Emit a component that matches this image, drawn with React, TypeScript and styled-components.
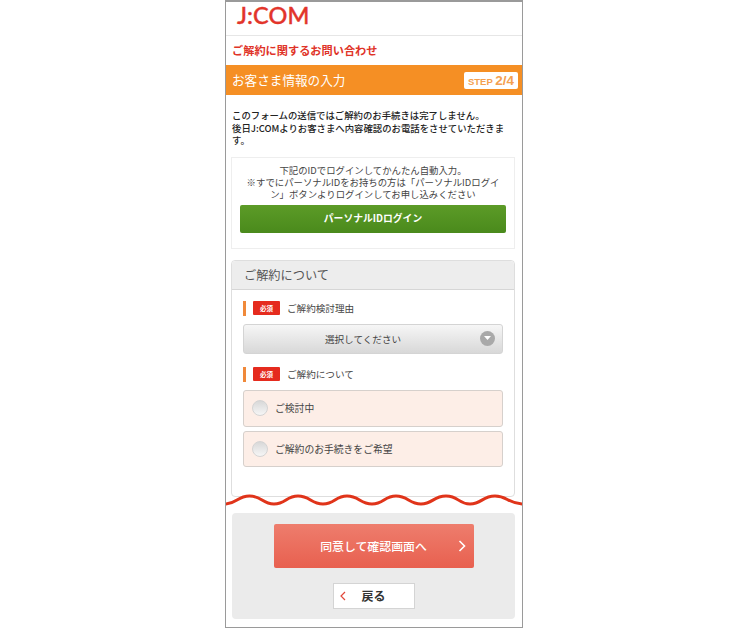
import React from 'react'
import styled, { createGlobalStyle } from 'styled-components'

const GlobalStyle = createGlobalStyle`
  html, body {
    margin: 0;
    padding: 0;
    background: #fff;
  }
  * {
    box-sizing: border-box;
  }
`

const App: React.FC = () => {
  return (
    <>
      <GlobalStyle />
      <Frame>
        <Header>
          <Logo>J:COM</Logo>
        </Header>
        <PageTitle>ご解約に関するお問い合わせ</PageTitle>
        <StepBar>
          <StepTitle>お客さま情報の入力</StepTitle>
          <StepBadge>
            STEP <b>2/4</b>
          </StepBadge>
        </StepBar>
        <Notice>
          このフォームの送信ではご解約のお手続きは完了しません。
          <br />
          後日J:COMよりお客さまへ内容確認のお電話をさせていただきます。
        </Notice>
        <LoginBox>
          <LoginText>
            下記のIDでログインしてかんたん自動入力。
            <br />
            ※すでにパーソナルIDをお持ちの方は「パーソナルIDログイン」ボタンよりログインしてお申し込みください
          </LoginText>
          <LoginButton>パーソナルIDログイン</LoginButton>
        </LoginBox>
        <Panel>
          <PanelHead>ご解約について</PanelHead>
          <PanelBody>
            <FieldLabel>
              <Required>必須</Required>
              ご解約検討理由
            </FieldLabel>
            <SelectBox>
              選択してください
              <SelectArrow>
                <svg width="7" height="4" viewBox="0 0 7 4">
                  <path d="M0 0h7L3.5 4z" fill="#fff" />
                </svg>
              </SelectArrow>
            </SelectBox>
            <FieldLabel>
              <Required>必須</Required>
              ご解約について
            </FieldLabel>
            <RadioCard $height={37}>
              <RadioDot />
              ご検討中
            </RadioCard>
            <RadioCard $height={36}>
              <RadioDot />
              ご解約のお手続きをご希望
            </RadioCard>
          </PanelBody>
        </Panel>
        <Wave viewBox="0 0 298 14" width="298" height="14">
          <path
            d="M-1 11 C 11 11 11 3 23.5 3 S 36 11 48 11 S 60 3 72 3 S 85 11 97 11 S 109 3 121 3 S 134 11 146 11 S 158 3 170 3 S 183 11 195 11 S 207 3 220 3 S 232 11 244 11 S 256 3 269 3 S 281 11 299 11"
            fill="none"
            stroke="#e0341a"
            strokeWidth="3"
          />
        </Wave>
        <Footer>
          <NextButton>
            同意して確認画面へ
            <NextIcon width="8" height="12" viewBox="0 0 8 12">
              <path d="M1.5 1l5 5-5 5" fill="none" stroke="#fff" strokeWidth="1.6" />
            </NextIcon>
          </NextButton>
          <BackButton>
            <BackIcon width="6" height="10" viewBox="0 0 6 10">
              <path d="M5 1L1 5l4 4" fill="none" stroke="#e2473a" strokeWidth="1.2" />
            </BackIcon>
            戻る
          </BackButton>
        </Footer>
      </Frame>
    </>
  )
}

export default App

const fontStack = `"Noto Sans CJK JP", "Liberation Sans", sans-serif`

const Frame = styled.div`
  position: relative;
  width: 298px;
  height: 628px;
  margin-left: 225px;
  border: 1px solid #9a9a9a;
  border-top-width: 2px;
  background: #fff;
  font-family: ${fontStack};
  overflow: hidden;
`

const Header = styled.div`
  height: 34px;
  padding-left: 11px;
  border-bottom: 1px solid #e6e6e6;
`

const Logo = styled.div`
  font-family: Lato, "Liberation Sans", sans-serif;
  font-size: 23.5px;
  line-height: 27px;
  font-weight: 500;
  letter-spacing: 0.1px;
  -webkit-text-stroke: 0.4px #e2342a;
  color: #e2342a;
`

const PageTitle = styled.h1`
  height: 29px;
  margin: 0;
  padding-left: 6px;
  font-size: 11.2px;
  line-height: 29px;
  font-weight: 700;
  color: #df3328;
`

const StepBar = styled.div`
  display: flex;
  align-items: center;
  justify-content: space-between;
  height: 30px;
  padding: 0 4px 0 6px;
  background: #f58f24;
`

const StepTitle = styled.div`
  padding-bottom: 2px;
  font-size: 12.6px;
  color: #fff;
`

const StepBadge = styled.div`
  width: 54px;
  height: 17px;
  border-radius: 2px;
  background: #fff;
  text-align: center;
  white-space: nowrap;
  font-family: "Liberation Sans", sans-serif;
  font-size: 9.5px;
  line-height: 17px;
  font-weight: 700;
  color: #f4a050;

  b {
    font-size: 13.5px;
  }
`

const Notice = styled.p`
  margin: 14px 0 10px;
  padding: 0 6px;
  font-size: 9.4px;
  line-height: 12.5px;
  font-weight: 500;
  color: #222;
`

const LoginBox = styled.div`
  height: 92px;
  margin: 0 7px 11px 5px;
  padding: 6px 8px 0;
  border: 1px solid #eeeeee;
`

const LoginText = styled.p`
  margin: 0 0 5px;
  text-align: center;
  font-size: 9.4px;
  line-height: 12.2px;
  color: #444;
`

const LoginButton = styled.div`
  height: 28px;
  border-radius: 2px;
  background: linear-gradient(#5c9b27, #4a8a1c);
  text-align: center;
  font-size: 9.8px;
  line-height: 27px;
  font-weight: 700;
  color: #fff;
`

const Panel = styled.div`
  height: 237px;
  margin: 0 7px 0 5px;
  border: 1px solid #dedede;
  border-radius: 4px;
`

const PanelHead = styled.div`
  height: 29px;
  padding-left: 12px;
  border-bottom: 1px solid #d6d6d6;
  border-radius: 4px 4px 0 0;
  background: #ededed;
  font-size: 12.2px;
  line-height: 28px;
  color: #555;
`

const PanelBody = styled.div`
  padding: 11px 11px 0;
`

const FieldLabel = styled.div`
  display: flex;
  align-items: center;
  height: 15px;
  margin-bottom: 8px;
  padding-left: 7px;
  border-left: 3px solid #f0893a;
  font-size: 9.6px;
  color: #444;
`

const Required = styled.span`
  width: 27px;
  height: 14px;
  margin-right: 7px;
  border-radius: 1px;
  background: #e52b1e;
  text-align: center;
  font-size: 6.5px;
  line-height: 14px;
  font-weight: 700;
  color: #fff;
`

const SelectBox = styled.div`
  position: relative;
  height: 30px;
  margin-bottom: 13px;
  padding-right: 20px;
  border: 1px solid #d4d4d4;
  border-radius: 3px;
  background: linear-gradient(#f6f6f6, #d8d8d8);
  text-align: center;
  font-size: 9.6px;
  line-height: 28px;
  color: #444;
`

const SelectArrow = styled.span`
  position: absolute;
  top: 6px;
  right: 7px;
  display: flex;
  align-items: center;
  justify-content: center;
  width: 15px;
  height: 15px;
  border-radius: 50%;
  background: #a9a9a9;
`

const RadioCard = styled.div<{ $height: number }>`
  display: flex;
  align-items: center;
  height: ${props => props.$height}px;
  margin-bottom: 4px;
  padding-left: 8px;
  border: 1px solid #d6d0cc;
  border-radius: 3px;
  background: #fdeee7;
  font-size: 9.8px;
  color: #444;
`

const RadioDot = styled.span`
  width: 16px;
  height: 16px;
  margin-right: 7px;
  border: 1px solid #d4d4d4;
  border-radius: 50%;
  background: linear-gradient(#d8d8d8, #f6f6f6);
`

const Wave = styled.svg`
  position: absolute;
  top: 491px;
  left: 0;
  display: block;
`

const Footer = styled.div`
  display: flex;
  flex-direction: column;
  align-items: center;
  height: 106px;
  margin: 16px 7px 0 6px;
  padding-top: 11px;
  border-radius: 4px;
  background: #ebebeb;
`

const NextButton = styled.div`
  position: relative;
  width: 200px;
  height: 44px;
  margin-bottom: 15px;
  border-radius: 2px;
  background: linear-gradient(#ee7d6d, #e8604f);
  text-align: center;
  font-size: 11.9px;
  line-height: 44px;
  font-weight: 500;
  color: #fff;
`

const NextIcon = styled.svg`
  position: absolute;
  top: 16px;
  right: 8px;
`

const BackButton = styled.div`
  position: relative;
  width: 82px;
  height: 26px;
  border: 1px solid #d4d4d4;
  background: #fff;
  text-align: center;
  font-size: 12px;
  line-height: 24px;
  font-weight: 700;
  color: #333;
`

const BackIcon = styled.svg`
  position: absolute;
  top: 7px;
  left: 6px;
`
